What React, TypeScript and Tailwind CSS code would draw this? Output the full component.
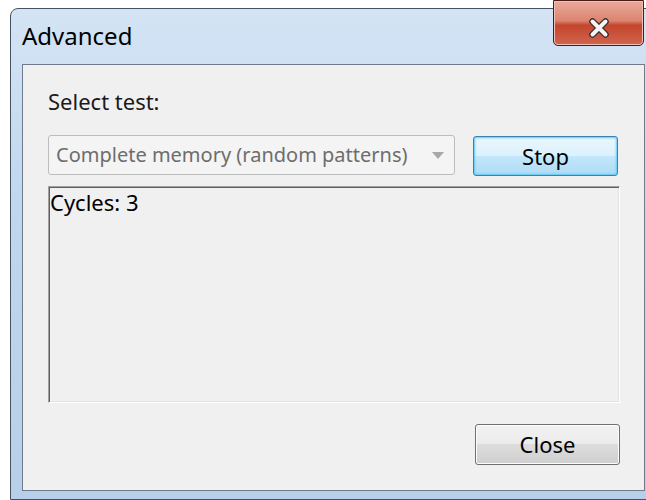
import React from 'react';

function CloseGlyph() {
  return (
    <svg width="24" height="20" viewBox="0 0 24 20">
      <path d="M5.5 3.5 L18.5 16.5 M18.5 3.5 L5.5 16.5" stroke="#3b2a2a" strokeWidth="6.5" strokeLinecap="round" />
      <path d="M5.5 3.5 L18.5 16.5 M18.5 3.5 L5.5 16.5" stroke="#f4f4f4" strokeWidth="4" strokeLinecap="round" />
    </svg>
  );
}

export default function App() {
  return (
    <div className="w-[646px] h-[500px] overflow-hidden bg-white pt-[8px] pl-[10px] font-['Noto_Sans',sans-serif]">
      <div className="w-[647px] h-[492px] flex flex-col rounded-t-[8px] border border-[#46525f] bg-[linear-gradient(to_bottom,#d4e4f5_0%,#c0d7ee_40%,#b7cfe8_100%)] px-[11px] pb-[8px]">
        {/* title bar */}
        <div className="h-[55px] flex justify-between items-start">
          <span className="mt-[11px] text-[24px] leading-[32px] text-black">Advanced</span>
          <div className="-mt-[9px] mr-[1px] w-[91px] h-[46px] rounded-b-[5px] border border-[#4a1c16] bg-[linear-gradient(to_bottom,#e9aa9c_0%,#dc8470_45%,#c4452c_55%,#d0654e_100%)] shadow-[inset_0_0_0_1px_#f0c0b4] flex items-center justify-center pt-[9px]">
            <CloseGlyph />
          </div>
        </div>

        {/* client area */}
        <div className="flex-1 flex flex-col bg-[#f0f0f0] border border-[#6f7b8a] pl-[25px] pr-[22px] pt-[22px]">
          <div className="text-[22px] leading-[28px] text-[#1a1a1a]">Select test:</div>

          <div className="mt-[19px] flex items-center gap-[18px]">
            <div className="w-[407px] h-[40px] rounded-[3px] border border-[#bcbcbc] bg-[#f4f4f4] flex items-center justify-between pl-[7px] pr-[10px]">
              <span className="text-[20px] text-[#6d6d6d]">Complete memory (random patterns)</span>
              <svg width="12" height="7" viewBox="0 0 12 7">
                <path d="M0 0 H12 L6 7 Z" fill="#a8a8a8" />
              </svg>
            </div>
            <div className="w-[145px] h-[40px] mt-[2px] rounded-[3px] border border-[#3c7fb1] bg-[linear-gradient(to_bottom,#eaf6fd_0%,#dcf1fc_50%,#c4e7fb_50%,#aedbf6_100%)] shadow-[inset_0_0_2px_1px_#5ccbf5] flex items-center justify-center text-[22px] text-black">
              Stop
            </div>
          </div>

          <div className="mt-[10px] h-[217px] w-[572px] border border-t-[#a0a0a0] border-l-[#a0a0a0] border-b-white border-r-white shadow-[inset_1px_1px_0_#5f5f5f,inset_-1px_-1px_0_#e3e3e3] bg-[#f0f0f0] pl-[1px] pt-[1px]">
            <span className="text-[22px] leading-[28px] text-black">Cycles: 3</span>
          </div>

          <div className="mt-[21px] self-end mr-[2px] w-[145px] h-[41px] rounded-[3px] border border-[#707070] bg-[linear-gradient(to_bottom,#f2f2f2_0%,#ebebeb_50%,#dddddd_50%,#cfcfcf_100%)] shadow-[inset_0_0_0_1px_#fcfcfc] flex items-center justify-center text-[22px] text-black">
            Close
          </div>
        </div>
      </div>
    </div>
  );
}
